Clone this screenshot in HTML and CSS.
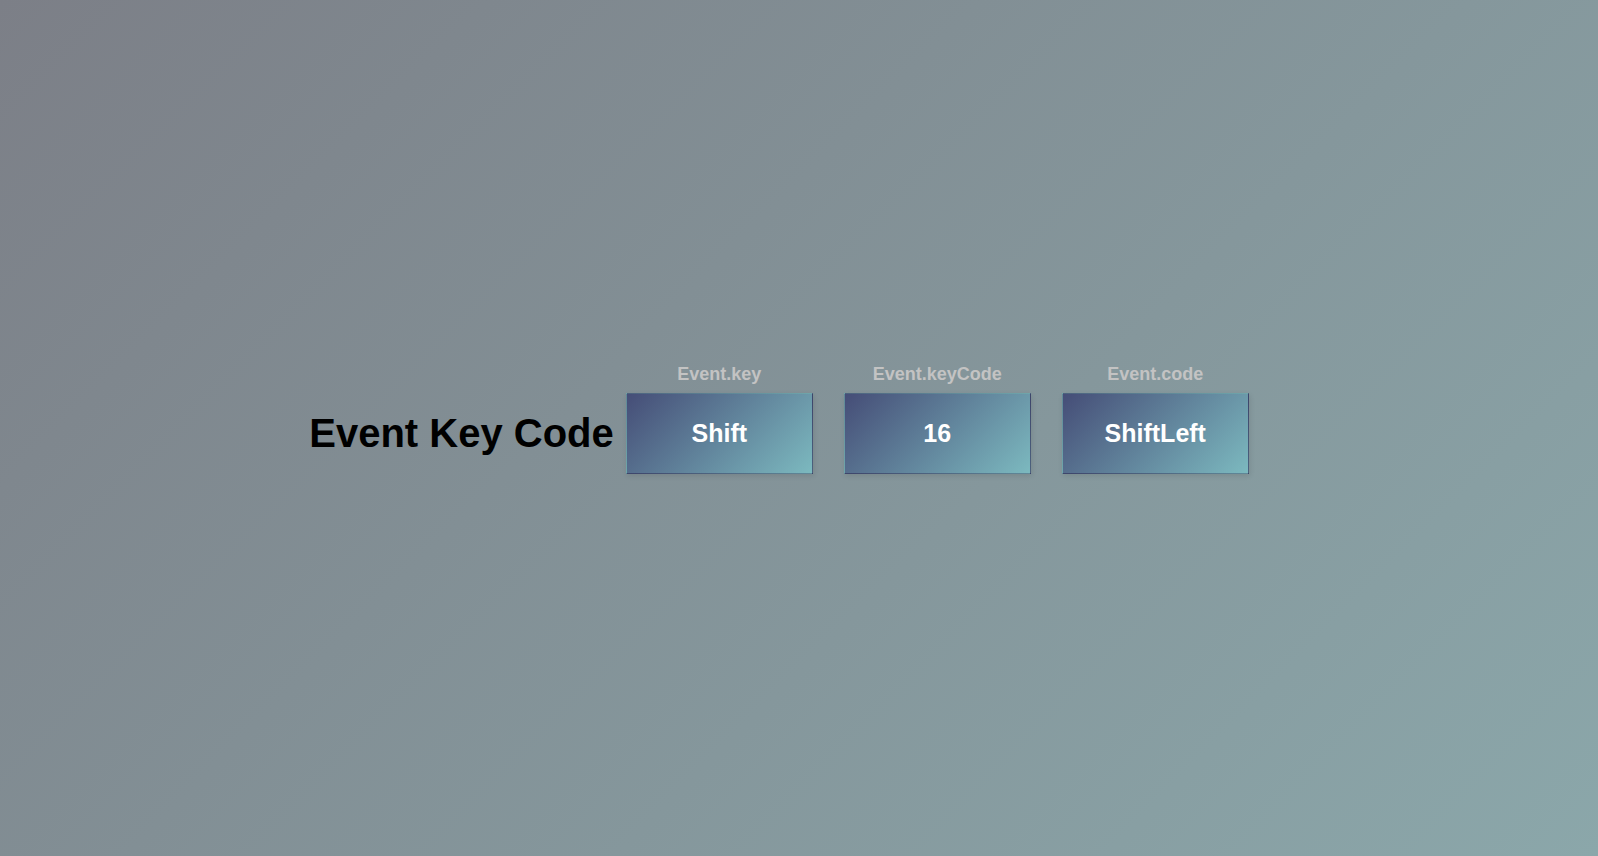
FILE: index.html
```html
<!DOCTYPE html>
<html lang="en">
<head>
<meta charset="utf-8">
<title>Event Key Code</title>
<link rel="stylesheet" href="styles.css">
</head>
<body>
<main class="page">
  <h1 class="title">Event Key Code</h1>
  <dl class="keys">
    <div class="key"><dt class="label">Event.key</dt><dd class="value">Shift</dd></div>
    <div class="key"><dt class="label">Event.keyCode</dt><dd class="value">16</dd></div>
    <div class="key"><dt class="label">Event.code</dt><dd class="value">ShiftLeft</dd></div>
  </dl>
</main>
</body>
</html>
```
FILE: styles.css
```css
* {
  box-sizing: border-box;
}

body {
  margin: 0;
  font-family: Arial, "Liberation Sans", sans-serif;
  font-weight: bold;
}

.page {
  display: flex;
  align-items: center;
  justify-content: center;
  min-height: 100vh;
  padding: 10px 0 0;
  background: linear-gradient(135deg, #7c7f87, #8ba7aa);
}

.title {
  margin: 0;
  font-size: 40px;
  line-height: 46px;
}

.keys {
  display: flex;
  gap: 31px;
  margin: 0 40px 0 12px;
}

.key {
  position: relative;
}

.label {
  position: absolute;
  bottom: 100%;
  left: 0;
  width: 100%;
  padding-bottom: 9px;
  color: #c3c3c3;
  font-size: 18px;
  line-height: 20px;
  text-align: center;
}

.value {
  display: flex;
  align-items: center;
  justify-content: center;
  width: 187px;
  height: 81px;
  margin: 0;
  border: 1px solid rgba(0, 0, 0, 0.1);
  background: linear-gradient(135deg, #454d77, #7cb9bf);
  box-shadow: 1px 2px 5px rgba(0, 0, 0, 0.1);
  color: #fff;
  font-size: 25px;
  line-height: 28px;
}
```
